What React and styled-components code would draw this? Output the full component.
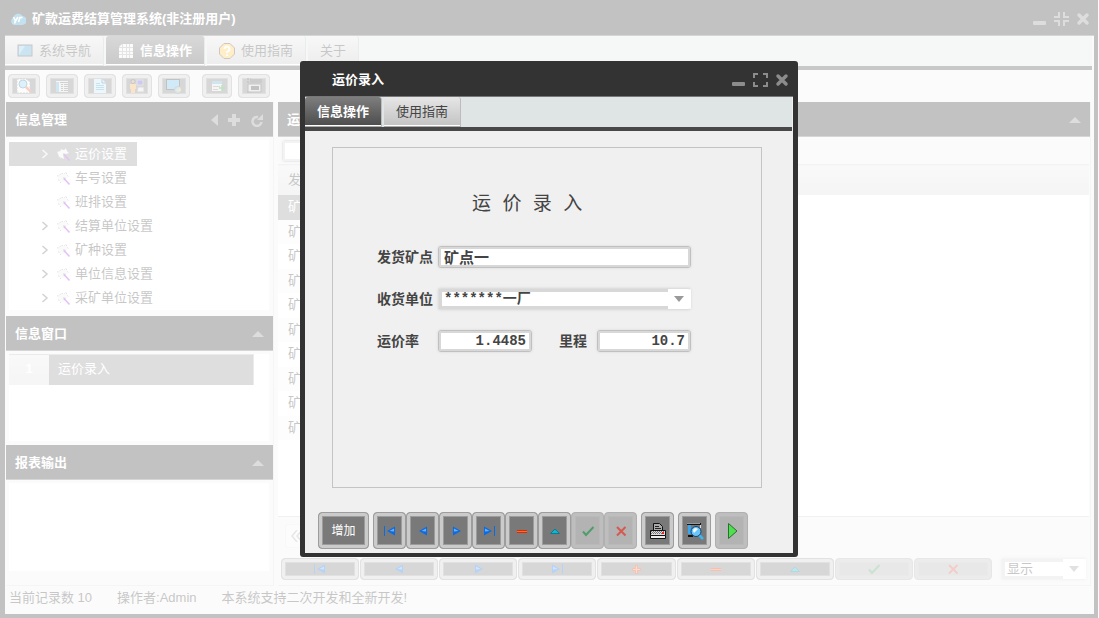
import React from "react";
import styled, { createGlobalStyle, css, ThemeProvider } from "styled-components";

const theme = {
  frame: "#333333",
  body: "#f0f0f0",
  strip: "#dfe5e5",
  line: "#c4c4c4",
  text: "#444444",
  muted: "#8c8c8c",
  selected: "#919191",
  button: "#797979",
  ring: "#cbcbcb",
  ui: '"Liberation Sans", "Noto Sans CJK SC", sans-serif',
  mono: '"Liberation Mono", "Noto Sans CJK SC", monospace',
};

const GlobalStyle = createGlobalStyle`
  *, *::before, *::after { box-sizing: border-box; }
  body { margin: 0; background: #fff; }
  button, input, select { font: inherit; color: inherit; margin: 0; }
  ul { list-style: none; margin: 0; padding: 0; }
  svg { display: block; flex: none; }
`;

/* ---------- window frame ---------- */

const Desktop = styled.div`
  font: 13px/20px ${(p) => p.theme.ui};
  color: ${(p) => p.theme.text};
`;

const MainWindow = styled.div`
  display: flex;
  flex-direction: column;
  min-height: 100vh;
  margin-right: 1px;
  padding: 0 4px 4px 5px;
  background: ${(p) => p.theme.frame};
`;

const TitleBar = styled.header`
  display: flex;
  align-items: center;
  height: 35px;
  padding: 3px 4px 0 5px;
  color: #fff;
  font-weight: bold;
`;

const TitleIcon = styled.span`
  width: 16px;
  height: 16px;
  margin-right: 6px;
`;

const TitleText = styled.h1`
  flex: 1;
  margin: 0;
  font-size: 13px;
  line-height: 20px;
`;

const WindowControls = styled.div`
  display: flex;
  gap: 7px;
`;

const BareButton = styled.button`
  display: flex;
  padding: 0;
  border: 0;
  background: none;
  color: ${(p) => p.theme.muted};
`;

const WindowBody = styled.div`
  display: flex;
  flex-direction: column;
  flex: 1;
  border-top: 1px solid #777;
  background: ${(p) => p.theme.body};
`;

/* ---------- tabs ---------- */

const TabStrip = styled.nav`
  display: flex;
  gap: 2px;
  height: 34px;
  margin-right: ${(p) => p.$inset};
  border-bottom: 4px solid #484848;
  background: ${(p) => p.theme.strip};
`;

const Tab = styled.button`
  display: flex;
  align-items: center;
  gap: 6px;
  height: 30px;
  padding: 0 12px;
  border: 0;
  border-right: 1px solid #bcbcbc;
  border-bottom: 1px solid #aaa;
  border-radius: 3px 3px 0 0;
  background: linear-gradient(#e6e6e6, #c3c3c3);
  box-shadow: inset 0 -1px 0 #fff;
  white-space: nowrap;
  ${(p) =>
    p.$active &&
    css`
      color: #fff;
      font-weight: bold;
      background: linear-gradient(#7e7e7e, #4c4c4c);
    `}
`;

/* ---------- buttons ---------- */

const ToolButton = styled.button`
  display: flex;
  align-items: center;
  justify-content: center;
  flex: ${(p) => (p.$grow ? "1" : "none")};
  width: ${(p) => p.$w || "auto"};
  height: ${(p) => p.$h};
  padding: 0;
  border: 1px solid #9d9d9d;
  border-radius: 4px;
  color: #fff;
  font-size: 12px;
  background: ${(p) => p.theme.button};
  box-shadow: inset 0 0 0 3px ${(p) => p.theme.ring}, inset 0 0 0 4px #9c9c9c;
  &:disabled {
    border-color: #b0b0b0;
    background: #b3b3b3;
    box-shadow: inset 0 0 0 3px #bebebe, inset 0 0 0 4px #b9b9b9;
  }
`;

const ToolBar = styled.div`
  display: flex;
  gap: 12px;
  padding: 4px 3px;
`;

const ToolGroup = styled.div`
  display: flex;
  gap: ${(p) => p.$gap};
`;

/* ---------- panels ---------- */

const Columns = styled.div`
  display: flex;
  flex: 1;
  gap: 4px;
  padding: 0 3px 0 1px;
`;

const SideColumn = styled.aside`
  display: flex;
  flex-direction: column;
  flex: none;
  width: 268px;
  border-right: 1px solid #dcdcdc;
  border-bottom: 1px solid #dcdcdc;
`;

const PanelHeader = styled.div`
  display: flex;
  align-items: center;
  gap: 9px;
  height: 35px;
  padding: 1px 9px 0;
  border-bottom: 1px solid #777;
  background: ${(p) => p.theme.frame};
  color: ${(p) => p.theme.muted};
`;

const PanelTitle = styled.h2`
  flex: 1;
  margin: 0;
  color: #fff;
  font-size: 13px;
  line-height: 20px;
`;

const PanelBox = styled.div`
  min-height: ${(p) => p.$h};
  flex: ${(p) => (p.$grow ? "1" : "none")};
  margin: 3px 4px ${(p) => p.$gap} 3px;
  padding-top: ${(p) => (p.$top ? "2px" : "0")};
  background: #fff;
`;

const TreeItem = styled.button`
  display: grid;
  grid-template-columns: 32px 15px 15px auto;
  align-items: center;
  height: 24px;
  padding: 0 10px 0 0;
  border: 0;
  background: ${(p) => (p.$selected ? p.theme.selected : "none")};
  color: ${(p) => (p.$selected ? "#fff" : p.theme.text)};
  & > span {
    grid-column: 4;
    padding-left: 4px;
  }
  & > svg:last-of-type { grid-column: 3; }
  & > svg:first-of-type:not(:last-of-type) { grid-column: 2; }
`;

const OpenWindow = styled.li`
  display: grid;
  grid-template-columns: 40px 1fr;
  width: 245px;
  height: 31px;
  color: #fff;
  line-height: 28px;
  border: 1px solid #bbb;
  border-left: 0;
`;

const OpenIndex = styled.span`
  text-align: center;
  font-weight: bold;
  background: linear-gradient(#eaeaea, #dedede);
`;

const OpenName = styled.button`
  padding: 0 0 2px 9px;
  border: 0;
  text-align: left;
  background: ${(p) => p.theme.selected};
`;

/* ---------- record list ---------- */

const ListColumn = styled.main`
  display: flex;
  flex-direction: column;
  flex: 1;
  min-width: 0;
  border: 1px solid #dcdcdc;
  border-width: 0 1px 1px 0;
`;

const SearchRow = styled.div`
  padding: 3px 4px;
  height: 27px;
`;

const fieldFrame = css`
  border: 1px solid #c0c0c0;
  border-radius: 3px;
  background: #fff;
  box-shadow: inset 0 0 0 2px #d8d8d8, 0 0 3px #d6d6d6;
`;

const SearchInput = styled.input`
  ${fieldFrame}
  display: block;
  width: 200px;
  height: 22px;
  padding: 0 5px;
`;

const Grid = styled.div`
  flex: 1;
  margin-right: 1px;
  background: #fff;
  border-bottom: 1px solid #d0d0d0;
`;

const RecordTable = styled.table`
  width: 100%;
  border-collapse: collapse;
  th, td { padding: 0 10px; text-align: left; font-weight: normal; }
  th { height: 30px; border-top: 1px solid #d6d6d6; background: linear-gradient(#ebebeb, #dcdcdc); }
  th:first-child { width: 300px; }
  tbody tr { height: 24px; }
  tbody tr:nth-child(odd) { height: 25px; }
  tbody tr:nth-child(even) td:first-child { background: #f8f8f8; }
  tbody tr:first-child td:first-child { background: ${(p) => p.theme.selected}; color: #fff; }
`;

const Pager = styled.div`
  height: 38px;
  padding: 7px;
`;

const PageButton = styled.button`
  display: flex;
  align-items: center;
  width: 26px;
  height: 24px;
  padding: 0 5px;
  border: 1px solid #e6e6e6;
  border-radius: 3px;
  background: #f3f6f4;
  color: #aaa;
`;

const RecordBar = styled.div`
  display: flex;
  gap: 9px;
  padding: 3px 4px 5px 3px;
`;

const RecordButtons = styled.div`
  display: flex;
  flex: 1;
  gap: 1px;
`;

const SelectBox = styled.span`
  ${fieldFrame}
  display: grid;
  grid-template-columns: 1fr 22px;
  align-items: center;
  width: ${(p) => p.$w};
  height: 22px;
  border-color: #dedede;
  border-right-color: #fff;
  box-shadow: 0 0 3px #d6d6d6;
  color: #9a9a9a;
  svg { justify-self: center; }
  select {
    appearance: none;
    height: 20px;
    min-width: 0;
    padding: 0 0 0 2px;
    border: solid #d8d8d8;
    border-width: 3px 0 3px 3px;
    line-height: 14px;
    background: #fff;
    color: ${(p) => p.theme.text};
    ${(p) => p.$mono && css`font: bold 14px/14px ${p.theme.mono};`}
  }
`;

const StatusBar = styled.footer`
  display: flex;
  gap: 25px;
  height: 28px;
  padding: 1px 4px;
  line-height: 22px;
`;

/* ---------- dialog ---------- */

const Overlay = styled.div`
  position: fixed;
  inset: 0;
  display: grid;
  place-items: center;
  padding-right: 1px;
  background: rgba(255, 255, 255, 0.7);
`;

const DialogWindow = styled.section`
  display: flex;
  flex-direction: column;
  width: 498px;
  padding: 0 5px 4px;
  border-radius: 3px;
  background: ${(p) => p.theme.frame};
`;

const EntryForm = styled.form`
  display: flex;
  flex-direction: column;
  min-height: 341px;
  margin: 16px 31px 0 27px;
  padding: 43px 70px 0 44px;
  border: 1px solid ${(p) => p.theme.line};
`;

const FormTitle = styled.h2`
  margin: 0 0 27px;
  padding-left: 95px;
  font: 19px/28px ${(p) => p.theme.mono};
`;

const FormRows = styled.div`
  display: flex;
  flex-direction: column;
  gap: 20px;
`;

const FormRow = styled.div`
  display: grid;
  grid-template-columns: ${(p) => (p.$pair ? "61px 94px 65px 94px" : "61px 1fr")};
  align-items: center;
  height: 22px;
`;

const FieldLabel = styled.label`
  padding-left: ${(p) => (p.$second ? "27px" : "0")};
  font-size: 14px;
  font-weight: bold;
  white-space: nowrap;
`;

const FieldInput = styled.input`
  ${fieldFrame}
  min-width: 0;
  width: 100%;
  height: 22px;
  padding: 0 5px;
  font: bold ${(p) => (p.$number ? "14px" : "15px")}/20px ${(p) => p.theme.mono};
  text-align: ${(p) => (p.$number ? "right" : "left")};
`;

const DialogActions = styled.div`
  display: flex;
  gap: 4px;
  padding: 24px 13px 4px;
`;

/* ---------- icons ---------- */

const MinimizeIcon = () => (
  <svg width="14" height="14" viewBox="0 0 14 14"><rect x="0" y="9" width="13" height="4" rx="1" fill="currentColor" /></svg>
);
const MaximizeIcon = () => (
  <svg width="15" height="14" viewBox="0 0 15 14"><path d="M1 5V1h4M10 1h4v4M14 9v4h-4M5 13H1V9" fill="none" stroke="currentColor" strokeWidth="2" /></svg>
);
const RestoreIcon = () => (
  <svg width="15" height="14" viewBox="0 0 15 14"><path d="M0 5h5V0M10 0v5h5M15 9h-5v5M5 14V9H0" fill="none" stroke="currentColor" strokeWidth="2" /></svg>
);
const CloseIcon = () => (
  <svg width="14" height="14" viewBox="0 0 14 14"><path d="M3 3l8 8M11 3l-8 8" stroke="currentColor" strokeWidth="3.500" strokeLinecap="round" /></svg>
);
const LogoIcon = () => (
  <svg width="16" height="16" viewBox="0 0 16 16">
    <path d="M4 14a4 4 0 0 1-.6-7.4A5 5 0 0 1 12.500 5 4.500 4.500 0 0 1 12 14z" fill="#3b9bc9" />
    <path d="M3.500 6l2 4L8 6M5.500 10L4.500 12.500M8.500 11L10 6.500h2.500" fill="none" stroke="#fff" strokeWidth="1.600" />
  </svg>
);
const CollapseUp = () => (
  <svg width="12" height="6" viewBox="0 0 12 6"><path d="M6 0l6 6H0z" fill="currentColor" /></svg>
);
const TriangleLeft = () => (
  <svg width="7" height="12" viewBox="0 0 7 12"><path d="M7 0v12L0 6z" fill="currentColor" /></svg>
);
const PlusIcon = () => (
  <svg width="14" height="12" viewBox="0 0 14 12"><path d="M7 0v12M1 6h12" stroke="currentColor" strokeWidth="4" /></svg>
);
const RefreshIcon = () => (
  <svg width="14" height="14" viewBox="0 0 14 14"><path d="M8 4A4.500 4.500 0 1 0 11.500 9" fill="none" stroke="currentColor" strokeWidth="2.500" /><path d="M13 1v6H7z" fill="currentColor" /></svg>
);
const Chevron = () => (
  <svg width="8" height="10" viewBox="0 0 8 10"><path d="M1.500 1L6 5 1.500 9" fill="none" stroke="currentColor" strokeWidth="1.500" opacity=".8" /></svg>
);
const GearIcon = () => (
  <svg width="15" height="15" viewBox="0 0 15 15">
    <path d="M1 5l3-1 1-2 3 1 2-2 1 3 2 2-3 1-3 0 1 5-2-1-3-1-1-3z" fill="#eee" />
    <path d="M1 5l3-1 1-2 3 1 2-2 1 3 2 2M5 12l-2-2-1-3" fill="none" stroke="#a5a5a5" strokeWidth="1" strokeDasharray="1.500 1.500" />
    <path d="M7 6l3 1-2 3z" fill="#999" />
    <path d="M8 7.500l5.500 6" stroke="#a435e0" strokeWidth="1.600" />
  </svg>
);
const DropArrow = () => (
  <svg width="10" height="6" viewBox="0 0 10 6"><path d="M0 0h10L5 6z" fill="currentColor" /></svg>
);
const DoubleLeft = () => (
  <svg width="12" height="12" viewBox="0 0 12 12"><path d="M6 0L1 6l5 6M11 0L6 6l5 6" fill="none" stroke="currentColor" strokeWidth="1.500" /></svg>
);

const ScreenIcon = () => (
  <svg width="16" height="16" viewBox="0 0 16 16"><rect x="1" y="2" width="14" height="11" fill="#52a5cf" stroke="#444" /><path d="M2 12V3h6z" fill="#8ecbe6" /></svg>
);
const TableIcon = () => (
  <svg width="16" height="16" viewBox="0 0 16 16"><path d="M4 1h11v14H1V4z" fill="#f2f2f2" /><path d="M1 4.500h14M1 8.500h14M1 11.500h14M4.500 1v14M8.500 1v14M11.500 1v14" stroke="#a5a5a5" /></svg>
);
const HelpIcon = () => (
  <svg width="16" height="16" viewBox="0 0 16 16"><path d="M5 .5h6L15.500 5v6L11 15.500H5L.5 11V5z" fill="#ffc84c" stroke="#6b3f30" /><path d="M5.500 6a2.500 2.500 0 1 1 3.500 2.200q-1 .5-1 1.800M8 11.500v1.500" fill="none" stroke="#fff" strokeWidth="2" /></svg>
);
const PreviewIcon = () => (
  <svg width="16" height="16" viewBox="0 0 16 16"><path d="M1 1h9l4 3v11H1z" fill="#f4f4f4" stroke="#888" strokeDasharray="2 1" /><circle cx="7" cy="6" r="4" fill="#8dd0ee" stroke="#38759e" /><path d="M10 9l4.500 4.500" stroke="#e4653e" strokeWidth="2.500" /></svg>
);
const ListIcon = () => (
  <svg width="16" height="16" viewBox="0 0 16 16"><rect x="2" y="3" width="12" height="11" fill="#ddd" /><rect x="2" y="4" width="3" height="10" fill="#60aed0" /><path d="M6 4.500h8M7 6.500h2M10 6.500h4M7 8.500h2M10 8.500h4M7 10.500h2M10 10.500h4M7 12.500h2M10 12.500h4" stroke="#666" /></svg>
);
const PageIcon = () => (
  <svg width="16" height="16" viewBox="0 0 16 16"><path d="M2 1h8l4 4v10H2z" fill="#bfe5f6" /><path d="M10 1v4h4" fill="none" stroke="#246f9e" /><path d="M4 5.500h4M4 7.500h8M4 9.500h8M4 11.500h8" stroke="#4a9fcc" /></svg>
);
const UserIcon = () => (
  <svg width="16" height="16" viewBox="0 0 16 16"><circle cx="4" cy="3.500" r="2" fill="#b99a70" stroke="#444" /><path d="M1 6h6v5H6v4H2v-4H1z" fill="#eda84c" /><rect x="8" y="2" width="6" height="5" fill="#5c49dc" stroke="#aaa" /><path d="M9 9h6v5H8z" fill="#ddd" stroke="#888" /></svg>
);
const ScreenUserIcon = () => (
  <svg width="16" height="16" viewBox="0 0 16 16"><rect x=".5" y="1.500" width="13" height="10" fill="#65b8e3" stroke="#333" /><circle cx="12" cy="12" r="3.500" fill="#72b9dd" stroke="#777" /><path d="M10 13l4-4 1 4z" fill="#e9bb4b" /></svg>
);
const AddRowIcon = () => (
  <svg width="16" height="16" viewBox="0 0 16 16"><path d="M3 3h10v10H3z" fill="#ddd" /><path d="M3 3h10v3H3z" fill="#64a7c6" /><path d="M4 8.500h7M4 11.500h5" stroke="#888" /><path d="M13 7v6M10 10h6" stroke="#21a328" strokeWidth="1.500" /></svg>
);
const DeviceIcon = () => (
  <svg width="16" height="16" viewBox="0 0 16 16"><path d="M1 1h4M1 4h2M1 14h4" stroke="#222" strokeDasharray="2 1" /><rect x="4" y="1" width="12" height="4" fill="#555" /><path d="M2 6h13v8H2z" fill="#ccc" stroke="#444" /><rect x="5" y="8" width="8" height="4" fill="#333" /></svg>
);

const blue = "#0d6be0";
const navShapes = {
  first: <><path d="M2.500 3v10" stroke={blue} /><path d="M13 3.500v9L5 8z" fill={blue} /><path d="M12 5.500v3L7.500 8z" fill="#66b0ff" /></>,
  prev: <><path d="M12 3.500v9L4 8z" fill={blue} /><path d="M11 5.500v3L6.500 8z" fill="#66b0ff" /></>,
  next: <><path d="M5 3.500v9L13 8z" fill={blue} /><path d="M6 5.500v3L10.500 8z" fill="#66b0ff" /></>,
  last: <><path d="M3 3.500v9L11 8z" fill={blue} /><path d="M4 5.500v3L8.500 8z" fill="#66b0ff" /><path d="M13.500 3v10" stroke={blue} /></>,
  plus: <><path d="M8.500 4v9M4 8.500h9" stroke="#d93c10" strokeWidth="3" /><path d="M8.500 5v7M5 8.500h7" stroke="#ff8a50" /></>,
  minus: <><path d="M3 8.500h10" stroke="#d92c00" strokeWidth="3" /><path d="M3 8.500h10" stroke="#ff6a30" /></>,
  up: <><path d="M8 6l4.500 4.500h-9z" fill="#12b4cf" stroke="#087c90" /></>,
  check: <path d="M3 8.500L6 12l7.500-8" fill="none" stroke="#4f9d6b" strokeWidth="2" />,
  cross: <path d="M4 4l8.500 8.500M12.500 4L4 12.500" stroke="#d6584e" strokeWidth="2" />,
};
const NavIcon = ({ kind }) => <svg width="16" height="16" viewBox="0 0 16 16">{navShapes[kind]}</svg>;

const PrinterIcon = () => (
  <svg width="18" height="18" viewBox="0 0 18 18">
    <path d="M4.500 9.500V1.500h6l3 3v5z" fill="#aaa" stroke="#111" />
    <path d="M6 4.500h4M6 6.500h6" stroke="#222" />
    <path d="M1.500 8.500h15v5h-15z" fill="#ddd" stroke="#111" />
    <path d="M2 9.500h13M3 10.500h12M2 11.500h13" stroke="#777" strokeDasharray="1 1" />
    <rect x="13" y="10" width="2" height="2" fill="#e22" />
    <path d="M1.500 13.500h15v3h-15z" fill="#eee" stroke="#111" />
  </svg>
);
const MagnifyIcon = () => (
  <svg width="18" height="18" viewBox="0 0 18 18">
    <path d="M1 2h14M2 14h5" stroke="#111" strokeWidth="2" />
    <path d="M1 1.500h13" stroke="#999" />
    <rect x="2" y="3" width="3" height="9" fill="#3aa6ee" />
    <path d="M14.500 3v3" stroke="#ddd" />
    <path d="M13 13l4 4" stroke="#3ab7f2" strokeWidth="2.500" />
    <circle cx="10" cy="9.500" r="5" fill="#6cc4fa" stroke="#0b4776" />
    <path d="M7 9a3 3 0 0 1 3-3l2 1-4 4z" fill="#f1fbff" />
  </svg>
);
const RunIcon = () => (
  <svg width="18" height="18" viewBox="0 0 18 18"><path d="M5.500 1.500L14 9l-8.500 7.500z" fill="#4fe04f" stroke="#2c6e30" /></svg>
);

/* ---------- composition ---------- */

function WindowTitle({ icon, title, restored }) {
  return (
    <TitleBar>
      <TitleIcon>{icon}</TitleIcon>
      <TitleText>{title}</TitleText>
      <WindowControls>
        <BareButton aria-label="最小化"><MinimizeIcon /></BareButton>
        <BareButton aria-label="最大化">{restored ? <RestoreIcon /> : <MaximizeIcon />}</BareButton>
        <BareButton aria-label="关闭"><CloseIcon /></BareButton>
      </WindowControls>
    </TitleBar>
  );
}

const treeItems = [
  { name: "运价设置", open: true, selected: true },
  { name: "车号设置" },
  { name: "班排设置" },
  { name: "结算单位设置", open: true },
  { name: "矿种设置", open: true },
  { name: "单位信息设置", open: true },
  { name: "采矿单位设置", open: true },
];

const mainTools = [
  [["预览", PreviewIcon, "32px"], ["列表", ListIcon, "32px"], ["文档", PageIcon, "32px"], ["用户", UserIcon, "30px"], ["窗口", ScreenUserIcon, "32px"]],
  [["新增行", AddRowIcon, "30px"], ["设备", DeviceIcon, "32px"]],
];

const listNav = ["first", "prev", "next", "last", "plus", "minus", "up", "check", "cross"];
const dialogNav = ["first", "prev", "next", "last", "minus", "up", "check", "cross"];
const isDisabled = (kind) => kind === "check" || kind === "cross";

function SidePanel({ title, children, ...box }) {
  return (
    <>
      <PanelHeader>
        <PanelTitle>{title}</PanelTitle>
        <BareButton aria-label="折叠"><CollapseUp /></BareButton>
      </PanelHeader>
      <PanelBox {...box}>{children}</PanelBox>
    </>
  );
}

function Sidebar() {
  return (
    <SideColumn>
      <PanelHeader>
        <PanelTitle>信息管理</PanelTitle>
        <BareButton aria-label="收起"><TriangleLeft /></BareButton>
        <BareButton aria-label="添加"><PlusIcon /></BareButton>
        <BareButton aria-label="刷新"><RefreshIcon /></BareButton>
      </PanelHeader>
      <PanelBox $h="170px" $gap="6px" $top>
        <ul>
          {treeItems.map((item) => (
            <li key={item.name}>
              <TreeItem $selected={item.selected}>
                {item.open && <Chevron />}
                <GearIcon />
                <span>{item.name}</span>
              </TreeItem>
            </li>
          ))}
        </ul>
      </PanelBox>
      <SidePanel title="信息窗口" $h="87px" $gap="4px">
        <ul>
          <OpenWindow>
            <OpenIndex>1</OpenIndex>
            <OpenName>运价录入</OpenName>
          </OpenWindow>
        </ul>
      </SidePanel>
      <SidePanel title="报表输出" $h="80px" $gap="14px" $grow />
    </SideColumn>
  );
}

function RecordList() {
  return (
    <ListColumn>
      <PanelHeader>
        <PanelTitle>运价</PanelTitle>
        <BareButton aria-label="折叠"><CollapseUp /></BareButton>
      </PanelHeader>
      <SearchRow><SearchInput aria-label="查询" /></SearchRow>
      <Grid>
        <RecordTable>
          <thead><tr><th>发货</th><th /></tr></thead>
          <tbody>
            {Array.from({ length: 10 }, (_, i) => <tr key={i}><td>矿点</td><td /></tr>)}
          </tbody>
        </RecordTable>
      </Grid>
      <Pager><PageButton aria-label="首页"><DoubleLeft /></PageButton></Pager>
      <RecordBar>
        <RecordButtons>
          {listNav.map((kind) => (
            <ToolButton key={kind} $grow $h="22px" aria-label={kind} disabled={isDisabled(kind)}><NavIcon kind={kind} /></ToolButton>
          ))}
        </RecordButtons>
        <SelectBox $w="85px">
          <select aria-label="显示方式"><option>显示</option></select>
          <DropArrow />
        </SelectBox>
      </RecordBar>
    </ListColumn>
  );
}

function RateDialog() {
  return (
    <Overlay>
      <DialogWindow role="dialog" aria-label="运价录入">
        <WindowTitle title="运价录入" />
        <WindowBody>
          <TabStrip $inset="1px">
            <Tab $active>信息操作</Tab>
            <Tab>使用指南</Tab>
          </TabStrip>
          <EntryForm>
            <FormTitle>运 价 录 入</FormTitle>
            <FormRows>
              <FormRow>
                <FieldLabel htmlFor="origin">发货矿点</FieldLabel>
                <FieldInput id="origin" defaultValue="矿点一" />
              </FormRow>
              <FormRow>
                <FieldLabel htmlFor="receiver">收货单位</FieldLabel>
                <SelectBox $w="100%" $mono>
                  <select id="receiver"><option>*******一厂</option></select>
                  <DropArrow />
                </SelectBox>
              </FormRow>
              <FormRow $pair>
                <FieldLabel htmlFor="rate">运价率</FieldLabel>
                <FieldInput id="rate" $number defaultValue="1.4485" />
                <FieldLabel htmlFor="distance" $second>里程</FieldLabel>
                <FieldInput id="distance" $number defaultValue="10.7" />
              </FormRow>
            </FormRows>
          </EntryForm>
          <DialogActions>
            <ToolButton $w="51px" $h="37px">增加</ToolButton>
            <ToolGroup $gap="0">
              {dialogNav.map((kind) => (
                <ToolButton key={kind} $w="33px" $h="37px" aria-label={kind} disabled={isDisabled(kind)}><NavIcon kind={kind} /></ToolButton>
              ))}
            </ToolGroup>
            <ToolButton $w="33px" $h="37px" aria-label="打印"><PrinterIcon /></ToolButton>
            <ToolButton $w="33px" $h="37px" aria-label="预览"><MagnifyIcon /></ToolButton>
            <ToolButton $w="33px" $h="37px" aria-label="运行" disabled><RunIcon /></ToolButton>
          </DialogActions>
        </WindowBody>
      </DialogWindow>
    </Overlay>
  );
}

export default function App() {
  return (
    <ThemeProvider theme={theme}>
      <GlobalStyle />
      <Desktop>
        <MainWindow>
          <WindowTitle icon={<LogoIcon />} title="矿款运费结算管理系统(非注册用户)" restored />
          <WindowBody>
            <TabStrip $inset="2px">
              <Tab><ScreenIcon />系统导航</Tab>
              <Tab $active><TableIcon />信息操作</Tab>
              <Tab><HelpIcon />使用指南</Tab>
              <Tab>关于</Tab>
            </TabStrip>
            <ToolBar>
              {mainTools.map((group, i) => (
                <ToolGroup key={i} $gap="6px">
                  {group.map(([name, Icon, width]) => (
                    <ToolButton key={name} $w={width} $h="24px" aria-label={name}><Icon /></ToolButton>
                  ))}
                </ToolGroup>
              ))}
            </ToolBar>
            <Columns>
              <Sidebar />
              <RecordList />
            </Columns>
            <StatusBar>
              <span>当前记录数 10</span>
              <span>操作者:Admin</span>
              <span>本系统支持二次开发和全新开发!</span>
            </StatusBar>
          </WindowBody>
        </MainWindow>
        <RateDialog />
      </Desktop>
    </ThemeProvider>
  );
}
